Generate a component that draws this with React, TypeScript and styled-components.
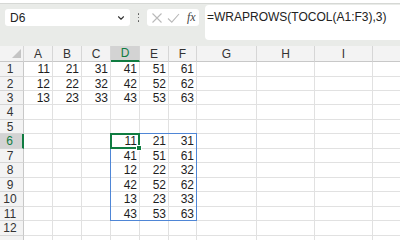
import styled, { createGlobalStyle } from 'styled-components';
import { ChevronDown } from 'lucide-react';

const GlobalStyle = createGlobalStyle`
    html, body {
        margin: 0;
        padding: 0;
        background: #ffffff;
        overflow: hidden;
    }
    body {
        font-family: "Liberation Sans", Arial, sans-serif;
        font-size: 12px;
        color: #222;
    }
`;

const COLS = ['A', 'B', 'C', 'D', 'E', 'F', 'G', 'H', 'I', ''];
const ROW_HEIGHTS = [15, 14, 14, 15, 14, 15, 14, 15, 14, 15, 14, 15, 14];
const LAST_LABELLED_ROW = 12; // row 13 is only a sliver at the bottom edge

// cell values by row number -> column letter
const DATA: Record<number, Record<string, string>> = {
    1: { A: '11', B: '21', C: '31', D: '41', E: '51', F: '61' },
    2: { A: '12', B: '22', C: '32', D: '42', E: '52', F: '62' },
    3: { A: '13', B: '23', C: '33', D: '43', E: '53', F: '63' },
    6: { D: '11', E: '21', F: '31' },
    7: { D: '41', E: '51', F: '61' },
    8: { D: '12', E: '22', F: '32' },
    9: { D: '42', E: '52', F: '62' },
    10: { D: '13', E: '23', F: '33' },
    11: { D: '43', E: '53', F: '63' },
};

function App() {
    return (
        <>
            <GlobalStyle />
            <Window>
                <Top>
                    <RibbonEdge />
                    <Bar>
                        <NameBox>
                            <span>D6</span>
                            <ChevronDown size={10} strokeWidth={2.6} color="#333" />
                        </NameBox>
                        <Grip>
                            <i />
                            <i />
                            <i />
                        </Grip>
                        <FxBox>
                            <svg width="12" height="12" viewBox="0 0 12 12">
                                <path d="M1.5 1.5 L10.5 10.5 M10.5 1.5 L1.5 10.5" stroke="#b9b9b9" strokeWidth="1.1" fill="none" />
                            </svg>
                            <svg width="13" height="12" viewBox="0 0 13 12">
                                <path d="M1 6.5 L4.8 10.2 L12 2" stroke="#b9b9b9" strokeWidth="1.1" fill="none" />
                            </svg>
                            <Fx>fx</Fx>
                        </FxBox>
                        <FormulaBox>=WRAPROWS(TOCOL(A1:F3),3)</FormulaBox>
                    </Bar>
                </Top>
                <Sheet>
                    <Corner>
                        <Triangle />
                    </Corner>
                    {COLS.map((c, ci) => (
                        <ColHeader key={'c' + ci} $col={ci + 2} $active={c === 'D'}>
                            {c}
                        </ColHeader>
                    ))}
                    {ROW_HEIGHTS.map((_, i) => {
                        const r = i + 1;
                        return [
                            <RowHeader key={'h' + r} $row={r + 1} $active={r === 6}>
                                {r <= LAST_LABELLED_ROW ? r : ''}
                            </RowHeader>,
                            ...COLS.map((c, ci) => (
                                <Cell key={r + '-' + ci} $row={r + 1} $col={ci + 2}>
                                    {DATA[r]?.[c] ?? ''}
                                </Cell>
                            )),
                        ];
                    })}
                    <SpillRange />
                    <ActiveCell>
                        <FillHandle />
                    </ActiveCell>
                </Sheet>
            </Window>
        </>
    );
}

const Window = styled.div`
    width: 400px;
    height: 240px;
    overflow: hidden;
    background: #ffffff;
`;

const Top = styled.div`
    height: 46px;
    background: #e9ebe8;
`;

const RibbonEdge = styled.div`
    height: 3px;
    background: #ffffff;
    border-bottom: 1px solid #d6d8d5;
`;

const Bar = styled.div`
    display: flex;
    align-items: flex-start;
    padding-top: 1px;
`;

const NameBox = styled.div`
    margin: 4px 0 0 5px;
    width: 125px;
    height: 17px;
    box-sizing: border-box;
    background: #ffffff;
    border-radius: 3px;
    display: flex;
    align-items: center;
    justify-content: space-between;
    padding: 0 4px 0 5px;
    font-size: 12px;
    color: #222;
`;

const Grip = styled.div`
    width: 17px;
    height: 17px;
    margin-top: 4px;
    display: flex;
    flex-direction: column;
    align-items: center;
    justify-content: center;
    gap: 2px;

    i {
        width: 1.5px;
        height: 1.5px;
        background: #555;
        border-radius: 1px;
    }
`;

const FxBox = styled.div`
    margin-top: 4px;
    width: 52px;
    height: 17px;
    box-sizing: border-box;
    background: #ffffff;
    border-radius: 3px;
    display: flex;
    align-items: center;
    gap: 4px;
    padding-left: 4px;
`;

const Fx = styled.span`
    font-family: "Liberation Serif", "Times New Roman", serif;
    font-style: italic;
    font-size: 12px;
    color: #444;
    margin-left: 3px;
`;

const FormulaBox = styled.div`
    margin-left: 6px;
    flex: 1;
    height: 35px;
    box-sizing: border-box;
    background: #ffffff;
    border-radius: 4px 0 0 4px;
    padding: 5px 0 0 2px;
    font-size: 12px;
    line-height: 14px;
    color: #222;
    white-space: nowrap;
`;

const Sheet = styled.div`
    display: grid;
    grid-template-columns: 24px 29px 29px 29px 29px 29px 28px 60px 58px 58px 58px;
    grid-template-rows: 16px ${ROW_HEIGHTS.map((h) => h + 'px').join(' ')};
    width: 431px;
    font-size: 12px;
`;

const Corner = styled.div`
    grid-row: 1;
    grid-column: 1;
    background: #f3f3f3;
    border-right: 1px solid #d6d6d6;
    border-bottom: 1px solid #c8c8c8;
    display: flex;
    align-items: flex-end;
    justify-content: flex-end;
    padding: 0 2px 3px 0;
`;

const Triangle = styled.div`
    width: 0;
    height: 0;
    border-left: 9px solid transparent;
    border-bottom: 9px solid #c4c4c4;
`;

const ColHeader = styled.div<{ $col: number; $active?: boolean }>`
    grid-row: 1;
    grid-column: ${(p) => p.$col};
    box-sizing: border-box;
    background: ${(p) => (p.$active ? '#d3d3d3' : '#f3f3f3')};
    color: ${(p) => (p.$active ? '#107c41' : '#333')};
    border-right: 1px solid #d6d6d6;
    border-bottom: ${(p) => (p.$active ? '2px solid #107c41' : '1px solid #c8c8c8')};
    display: flex;
    align-items: center;
    justify-content: center;
    font-size: 12px;
    line-height: 14px;
`;

const RowHeader = styled.div<{ $row: number; $active?: boolean }>`
    grid-column: 1;
    grid-row: ${(p) => p.$row};
    box-sizing: border-box;
    background: ${(p) => (p.$active ? '#d3d3d3' : '#f3f3f3')};
    color: ${(p) => (p.$active ? '#107c41' : '#333')};
    border-right: ${(p) => (p.$active ? '2px solid #107c41' : '1px solid #c8c8c8')};
    border-bottom: 1px solid #d6d6d6;
    display: flex;
    align-items: center;
    justify-content: center;
    padding-right: 3px;
    font-size: 12px;
    line-height: 14px;
`;

const Cell = styled.div<{ $row: number; $col: number }>`
    grid-row: ${(p) => p.$row};
    grid-column: ${(p) => p.$col};
    box-sizing: border-box;
    border-right: 1px solid #e1e1e1;
    border-bottom: 1px solid #e1e1e1;
    display: flex;
    align-items: center;
    justify-content: flex-end;
    padding-right: 2px;
    font-size: 12px;
    line-height: 14px;
    color: #1e1e1e;
`;

const SpillRange = styled.div`
    grid-column: 5 / 8;
    grid-row: 7 / 13;
    margin: -1px 0 0 -1px;
    border: 1px solid #4f86d6;
    pointer-events: none;
`;

const ActiveCell = styled.div`
    grid-column: 5 / 6;
    grid-row: 7 / 8;
    margin: -1px 0 0 -1px;
    border: 2px solid #107c41;
    position: relative;
    pointer-events: none;
`;

const FillHandle = styled.div`
    position: absolute;
    right: -4px;
    bottom: -4px;
    width: 4px;
    height: 4px;
    background: #107c41;
    border: 1px solid #ffffff;
`;

export default App;
